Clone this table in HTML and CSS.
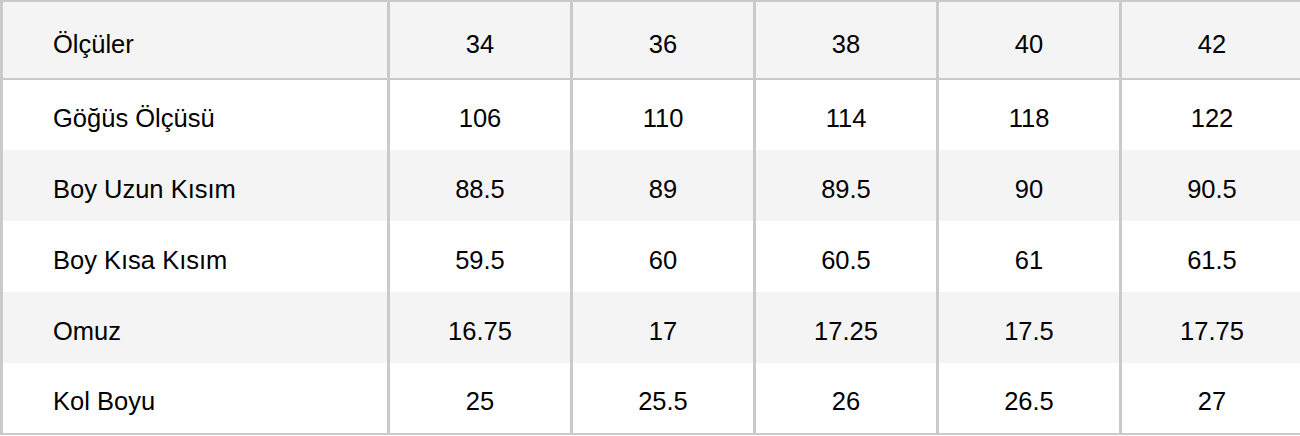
FILE: index.html
```html
<!DOCTYPE html>
<html lang="tr">
<head>
<meta charset="utf-8">
<link rel="stylesheet" href="styles.css">
</head>
<body>
<table class="size-table">
  <colgroup>
    <col class="col-label">
    <col class="col-size"><col class="col-size"><col class="col-size"><col class="col-size"><col class="col-size">
  </colgroup>
  <thead>
    <tr>
      <th class="label">Ölçüler</th><th>34</th><th>36</th><th>38</th><th>40</th><th>42</th>
    </tr>
  </thead>
  <tbody>
    <tr><td class="label">Göğüs Ölçüsü</td><td>106</td><td>110</td><td>114</td><td>118</td><td>122</td></tr>
    <tr><td class="label">Boy Uzun Kısım</td><td>88.5</td><td>89</td><td>89.5</td><td>90</td><td>90.5</td></tr>
    <tr><td class="label">Boy Kısa Kısım</td><td>59.5</td><td>60</td><td>60.5</td><td>61</td><td>61.5</td></tr>
    <tr><td class="label">Omuz</td><td>16.75</td><td>17</td><td>17.25</td><td>17.5</td><td>17.75</td></tr>
    <tr><td class="label">Kol Boyu</td><td>25</td><td>25.5</td><td>26</td><td>26.5</td><td>27</td></tr>
  </tbody>
</table>
</body>
</html>
```
FILE: styles.css
```css
html, body {
  margin: 0;
  padding: 0;
  background: #ffffff;
}
.size-table {
  width: 1300px;
  border-collapse: collapse;
  table-layout: fixed;
  font-family: "Liberation Sans", Arial, Helvetica, sans-serif;
  font-size: 25.5px;
  color: #000000;
}
.col-label { width: 387px; }
.col-size { width: 183px; }
.size-table th,
.size-table td {
  border-left: 3px solid #cacaca;
  border-right: 3px solid #cacaca;
  text-align: center;
  vertical-align: middle;
  font-weight: normal;
  padding: 7px 0 0 0;
  box-sizing: border-box;
}
.size-table thead th {
  height: 78px;
  padding-top: 9px;
  background: #f4f4f4;
  border-top: 2px solid #cacaca;
  border-bottom: 2px solid #cacaca;
}
.size-table tbody td {
  height: 71px;
}
.size-table tbody tr:nth-child(even) td {
  background: #f4f4f4;
}
.size-table tbody tr:last-child td {
  border-bottom: 2px solid #cacaca;
}
.size-table .label {
  text-align: left;
  padding-left: 50px;
}
```
